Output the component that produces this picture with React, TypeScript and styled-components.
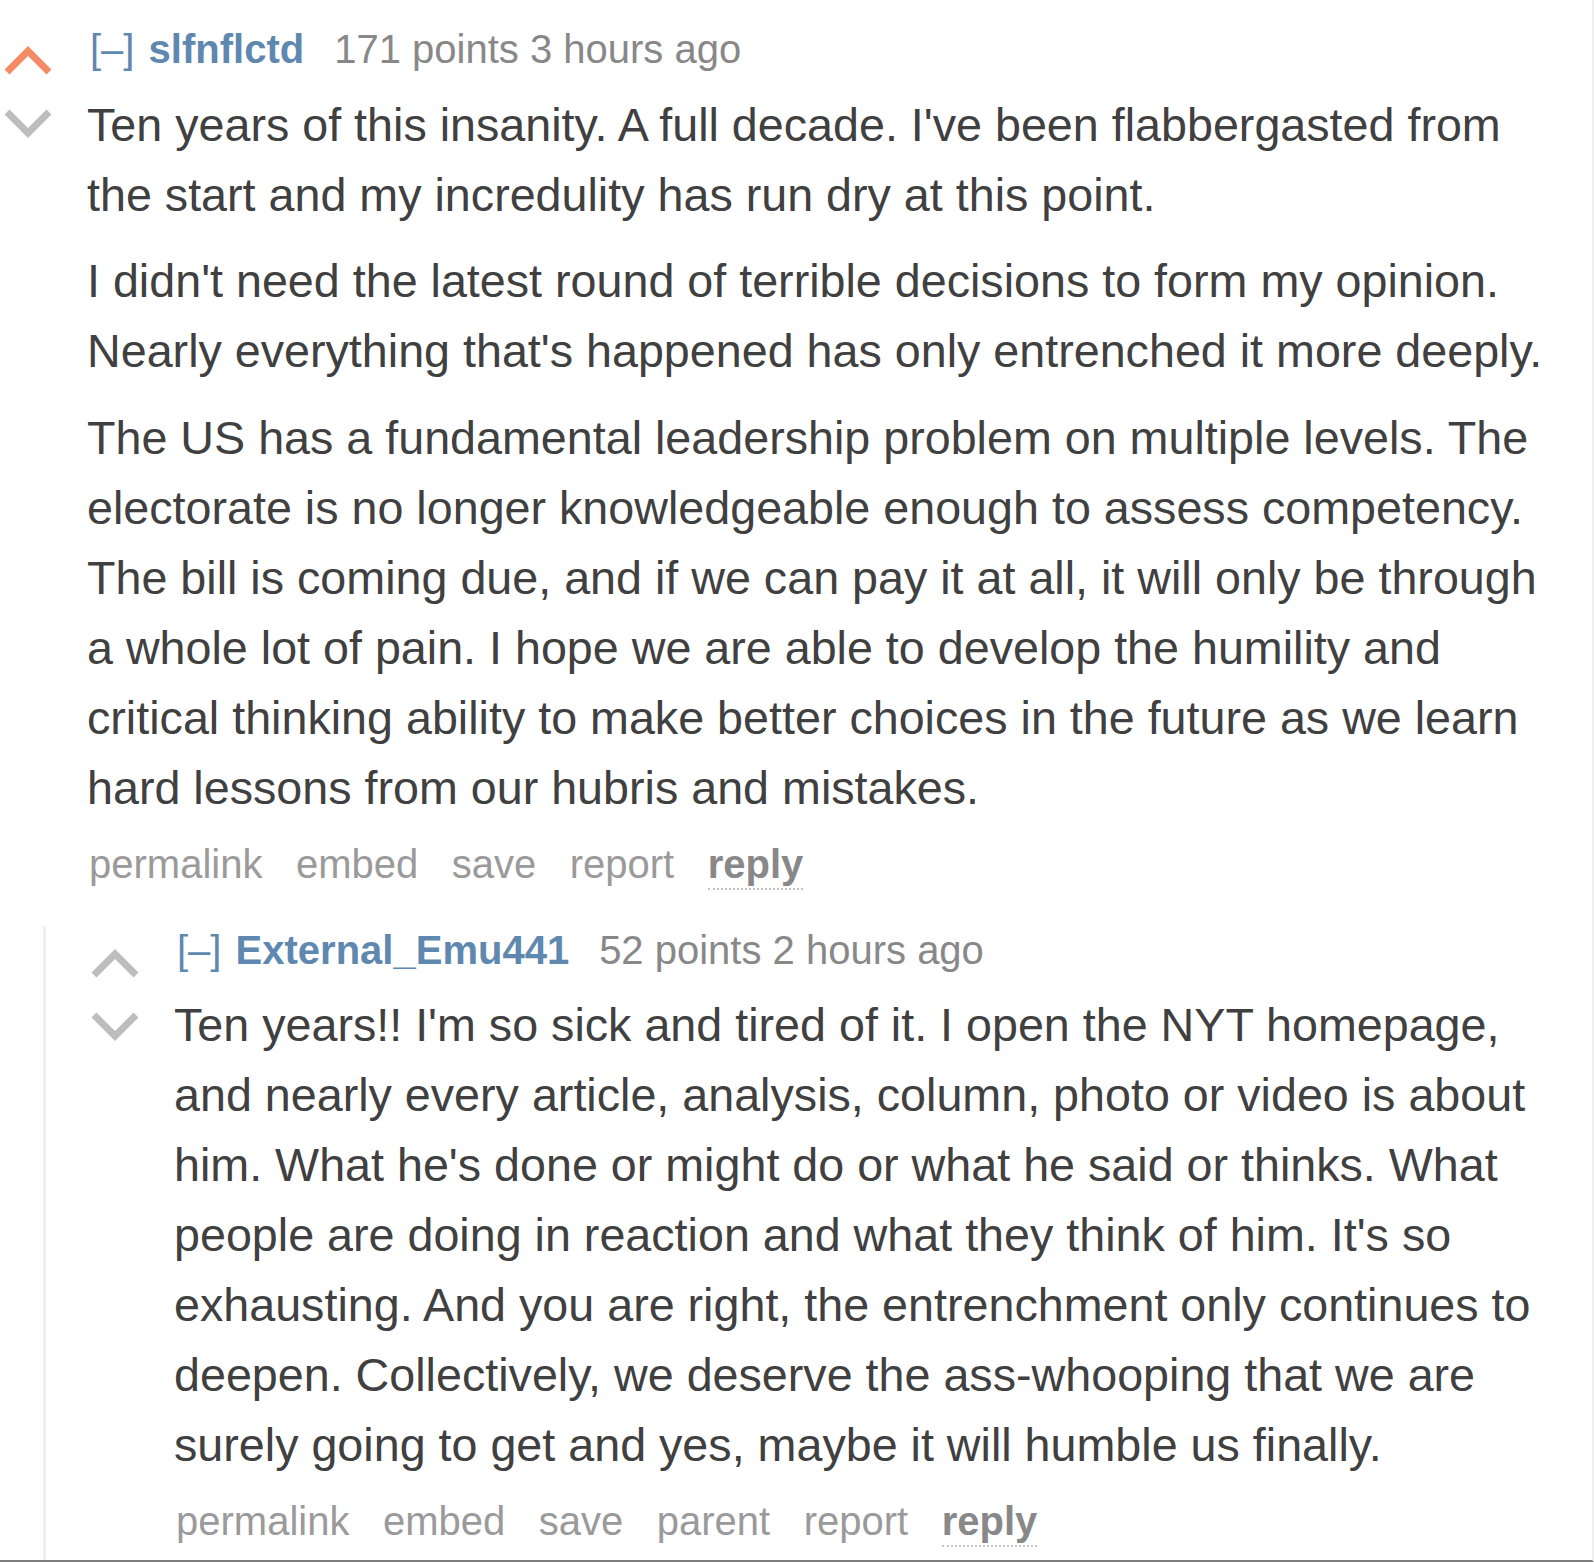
import React from "react";
import styled, { createGlobalStyle } from "styled-components";

const GlobalStyle = createGlobalStyle`
  html, body { margin: 0; padding: 0; background: #ffffff; }
  body { font-family: "Liberation Sans", Arial, Helvetica, sans-serif; }
  * { box-sizing: border-box; }
`;

const Page = styled.div`
  width: 1594px;
  height: 1562px;
  overflow: hidden;
  background: #ffffff;
  border-right: 2px solid #eeeeee;
  border-bottom: 2px solid #7d7d7d;
  padding: 25px 36px 0 3px;
`;

const Comment = styled.div``;

const Row = styled.div`
  display: flex;
  align-items: flex-start;
`;

const Midcol = styled.div<{ $top: number }>`
  width: 84px;
  flex-shrink: 0;
  display: flex;
  flex-direction: column;
  gap: 30px;
  padding-top: ${(p) => p.$top}px;
`;

const ArrowSvg = styled.svg`
  display: block;
  width: 50px;
  height: 32px;
`;

const Entry = styled.div`
  flex: 1;
  min-width: 0;
`;

const Tagline = styled.div`
  font-size: 40px;
  line-height: 48px;
  color: #888888;
  white-space: nowrap;
  padding-left: 3px;
`;

const Expand = styled.span`
  color: #5f88b0;
  margin-right: 3px;
`;

const Author = styled.span`
  color: #5f88b0;
  font-weight: bold;
`;

const Score = styled.span`
  margin-left: 30px;
`;

const Body = styled.div`
  margin-top: 16.67px;
  font-size: 46.67px;
  line-height: 70px;
  color: #404040;

  p {
    margin: 0 0 16.67px;
  }
`;

const Actions = styled.ul`
  display: flex;
  align-items: flex-start;
  gap: 33.5px;
  list-style: none;
  margin: 3px 0 0;
  padding: 0 0 0 2px;
  font-size: 40px;
  line-height: 48px;
`;

const ActionItem = styled.li<{ $strong?: boolean }>`
  display: inline-block;
  color: ${(p) => (p.$strong ? "#888888" : "#9a9a9a")};
  font-weight: ${(p) => (p.$strong ? "bold" : "normal")};
  border-bottom: ${(p) => (p.$strong ? "2px dotted #c4c4c4" : "none")};
`;

const Child = styled.div`
  margin-top: 36px;
  margin-left: 40px;
  border-left: 3px solid #efefef;
  padding-left: 44px;
  padding-bottom: 40px;
`;

const UpArrow = ({ color }: { color: string }) => (
  <ArrowSvg viewBox="0 0 50 32">
    <polyline
      points="4,27 25,6 46,27"
      fill="none"
      stroke={color}
      strokeWidth="7"
      strokeLinejoin="miter"
    />
  </ArrowSvg>
);

const DownArrow = ({ color }: { color: string }) => (
  <ArrowSvg viewBox="0 0 50 32">
    <polyline
      points="4,5 25,26 46,5"
      fill="none"
      stroke={color}
      strokeWidth="7"
      strokeLinejoin="miter"
    />
  </ArrowSvg>
);

type CommentData = {
  author: string;
  score: string;
  time: string;
  upvoted: boolean;
  paragraphs: string[];
  actions: string[];
};

const parent: CommentData = {
  author: "slfnflctd",
  score: "171 points",
  time: "3 hours ago",
  upvoted: true,
  paragraphs: [
    "Ten years of this insanity. A full decade. I've been flabbergasted from the start and my incredulity has run dry at this point.",
    "I didn't need the latest round of terrible decisions to form my opinion. Nearly everything that's happened has only entrenched it more deeply.",
    "The US has a fundamental leadership problem on multiple levels. The electorate is no longer knowledgeable enough to assess competency. The bill is coming due, and if we can pay it at all, it will only be through a whole lot of pain. I hope we are able to develop the humility and critical thinking ability to make better choices in the future as we learn hard lessons from our hubris and mistakes.",
  ],
  actions: ["permalink", "embed", "save", "report"],
};

const child: CommentData = {
  author: "External_Emu441",
  score: "52 points",
  time: "2 hours ago",
  upvoted: false,
  paragraphs: [
    "Ten years!! I'm so sick and tired of it. I open the NYT homepage, and nearly every article, analysis, column, photo or video is about him. What he's done or might do or what he said or thinks. What people are doing in reaction and what they think of him. It's so exhausting. And you are right, the entrenchment only continues to deepen. Collectively, we deserve the ass-whooping that we are surely going to get and yes, maybe it will humble us finally.",
  ],
  actions: ["permalink", "embed", "save", "parent", "report"],
};

const CommentRow = ({ data, arrowTop }: { data: CommentData; arrowTop: number }) => (
  <Row>
    <Midcol $top={arrowTop}>
      <UpArrow color={data.upvoted ? "#f48b64" : "#bdbdbd"} />
      <DownArrow color="#bdbdbd" />
    </Midcol>
    <Entry>
      <Tagline>
        <Expand>[–]</Expand> <Author>{data.author}</Author>
        <Score>{data.score}</Score> {data.time}
      </Tagline>
      <Body>
        {data.paragraphs.map((t, i) => (
          <p key={i}>{t}</p>
        ))}
      </Body>
      <Actions>
        {data.actions.map((a) => (
          <ActionItem key={a}>{a}</ActionItem>
        ))}
        <ActionItem $strong>reply</ActionItem>
      </Actions>
    </Entry>
  </Row>
);

export default function App() {
  return (
    <>
      <GlobalStyle />
      <Page>
        <Comment>
          <CommentRow data={parent} arrowTop={20} />
          <Child>
            <Comment>
              <CommentRow data={child} arrowTop={22} />
            </Comment>
          </Child>
        </Comment>
      </Page>
    </>
  );
}
